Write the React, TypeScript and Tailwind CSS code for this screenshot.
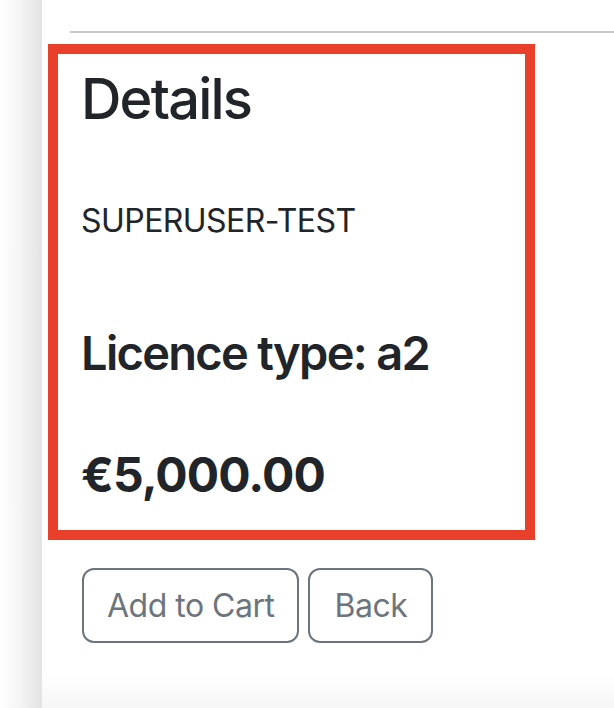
import React from "react";

export default function App() {
  return (
    <div
      className="flex h-[708px] w-[614px] overflow-hidden bg-white text-[#212529]"
      style={{ fontFamily: "Inter, 'Noto Sans', sans-serif" }}
    >
      <div className="h-full w-[42px] shrink-0 bg-linear-to-r from-white via-[#f4f4f4] to-[#e3e3e3]" />
      <div className="flex flex-1 flex-col">
        <div className="flex-1">
          <div className="ml-[28px] mt-[31px] h-[2px] bg-[#c8c8c8]" />
          <div className="ml-[6px] mt-[11px] box-border h-[496px] w-[487px] border-[10px] border-[#e8402a] pl-[23px] pt-[12px]">
            <h2 className="text-[56px] font-medium leading-[1.2] tracking-[-1.8px]">Details</h2>
            <p className="mt-[64px] text-[32px] leading-[1.5] tracking-[-0.55px]">SUPERUSER-TEST</p>
            <h3 className="mt-[79px] text-[47px] font-semibold leading-[1.225] tracking-[-1.7px]">
              Licence type: a2
            </h3>
            <h3 className="mt-[64px] text-[48px] font-bold leading-[1.2] tracking-[-0.9px]">€5,000.00</h3>
          </div>
          <div className="ml-[40px] mt-[28px] flex gap-[9px]">
            <button className="h-[75px] rounded-[12px] border-2 border-[#6c757d] px-[23px] text-[32px] leading-[1.5] tracking-[-0.5px] text-[#6c757d]">
              Add to Cart
            </button>
            <button className="h-[75px] rounded-[12px] border-2 border-[#6c757d] px-[24px] text-[32px] leading-[1.5] tracking-[-0.5px] text-[#6c757d]">
              Back
            </button>
          </div>
        </div>
        <div className="h-[33px] bg-linear-to-b from-white to-[#f6f6f6]" />
      </div>
    </div>
  );
}
